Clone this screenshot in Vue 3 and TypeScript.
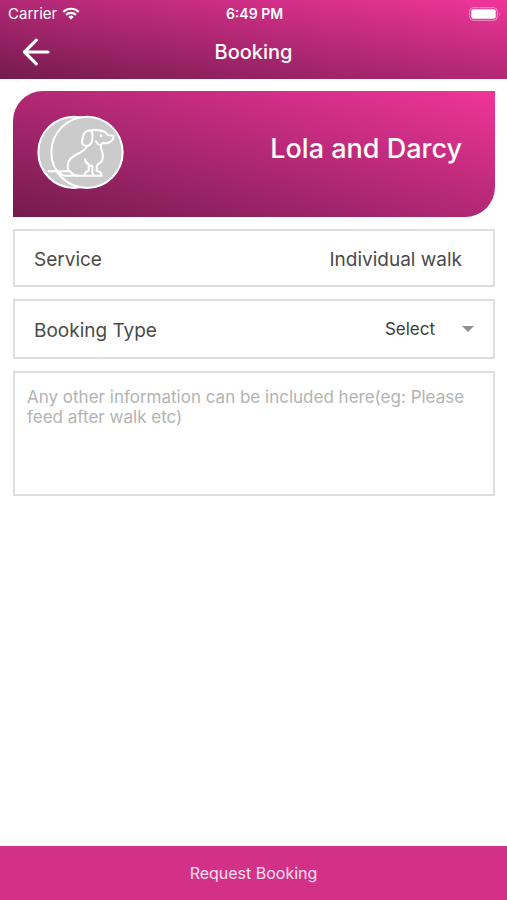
<script setup lang="ts">
import { ref } from 'vue'

const customer = 'Lola and Darcy'
const service = 'Individual walk'
const bookingTypes: string[] = ['One-off', 'Recurring']
const bookingType = ref('')
const notes = ref('')
</script>

<template>
  <div class="screen">
    <header class="top">
      <div class="status">
        <div class="carrier">
          <span>Carrier</span>
          <svg class="wifi" viewBox="0 0 18 13" aria-hidden="true">
            <path d="M1.2 4.9A11.2 11.2 0 0 1 16.8 4.9" />
            <path d="M4 7.9A7.2 7.2 0 0 1 14 7.9" />
            <path class="dot" d="M9 12.6L6.3 9.9A3.8 3.8 0 0 1 11.7 9.9Z" />
          </svg>
        </div>
        <span class="time">6:49 PM</span>
        <svg class="battery" viewBox="0 0 32 14" aria-hidden="true">
          <rect class="case" x="0.7" y="0.7" width="27.6" height="12.6" rx="3.6" />
          <rect class="charge" x="2.3" y="2.3" width="24.4" height="9.4" rx="2" />
          <path class="tip" d="M30 5Q31.6 7 30 9Z" />
        </svg>
      </div>
      <div class="nav">
        <button class="back" type="button" aria-label="Back">
          <svg viewBox="0 0 28 28" aria-hidden="true">
            <path d="M26 14H2.5M14.3 2.2L2.5 14L14.3 25.8" />
          </svg>
        </button>
        <h1>Booking</h1>
      </div>
    </header>

    <main class="content">
      <section class="card">
        <svg class="avatar" viewBox="111 104 261 225" aria-hidden="true">
          <circle class="disc" cx="222" cy="216" r="107" />
          <circle class="disc" cx="261" cy="216" r="107" />
          <path d="M145 273H178Q183 285 196 286H305Q304 273 290 272V259Q291 252 301 247C312 238 309 218 304 207C300 197 303 190 309 188C323 190 340 186 341 166L325 165Q317 154 305 151Q287 147 272 150" />
          <path d="M277 157C275 148 263 149 255 156C248 163 250 172 246 180C244 190 249 196 261 197C274 196 279 183 277 157Z" />
          <path d="M262 197C255 209 240 218 227 224C213 231 203 241 203 257Q202 267 208 273M183 273H210Q219 285 234 286" />
          <path d="M255 237Q255 246 266 252V271Q254 274 254 285M266 256H277V278L281 285" />
          <path d="M288 183Q290 190 297 193" />
          <circle class="eye" cx="303" cy="166" r="4" />
        </svg>
        <h2>{{ customer }}</h2>
      </section>

      <section class="row service">
        <span>Service</span>
        <span class="value">{{ service }}</span>
      </section>

      <section class="row type">
        <label for="booking-type">Booking Type</label>
        <div class="picker">
          <select id="booking-type" v-model="bookingType">
            <option value="">Select</option>
            <option v-for="t in bookingTypes" :key="t" :value="t">{{ t }}</option>
          </select>
          <svg class="caret" viewBox="0 0 12 6" aria-hidden="true"><path d="M0 0H12L6 6Z" /></svg>
        </div>
      </section>

      <textarea
        v-model="notes"
        class="notes"
        aria-label="Other information"
        placeholder="Any other information can be included here(eg: Please feed after walk etc)"
      ></textarea>
    </main>

    <button class="submit" type="button">Request Booking</button>
  </div>
</template>

<style>
body {
  margin: 0;
  background: #fff;
}
</style>

<style scoped>
.screen {
  display: flex;
  flex-direction: column;
  min-height: 100vh;
  font-family: Inter, "Liberation Sans", sans-serif;
  color: #4a4a4a;
}

.top {
  color: #fff;
  background: linear-gradient(to top right, #741b4f, #f03599);
}

.status {
  display: grid;
  grid-template-columns: 1fr auto 1fr;
  align-items: center;
  height: 27px;
  padding: 0 6px 0 8px;
  font-size: 15px;
}

.carrier {
  display: flex;
  align-items: center;
  gap: 5px;
}

.wifi {
  width: 18px;
  height: 13px;
  fill: none;
  stroke: #fff;
  stroke-width: 2.2;
}

.wifi .dot {
  fill: #fff;
  stroke: none;
}

.time {
  font-size: 14px;
  font-weight: 600;
}

.battery {
  justify-self: end;
  width: 32px;
  height: 14px;
  fill: #fff;
}

.battery .case {
  fill: none;
  stroke: #fff;
  stroke-opacity: 0.5;
}

.battery .tip {
  opacity: 0.5;
}

.nav {
  display: grid;
  grid-template-columns: 1fr auto 1fr;
  align-items: center;
  height: 50px;
  padding: 0 22px 2px;
}

.back {
  display: flex;
  justify-self: start;
  padding: 0;
  border: 0;
  background: none;
}

.back svg {
  width: 28px;
  height: 28px;
  fill: none;
  stroke: #fff;
  stroke-width: 3.2;
  stroke-linecap: round;
  stroke-linejoin: round;
}

h1,
h2 {
  margin: 0;
  font-weight: 500;
}

h1 {
  font-size: 20px;
}

.content {
  display: flex;
  flex: 1;
  flex-direction: column;
  gap: 12px;
  padding: 12px 12px 12px 13px;
}

.card {
  display: flex;
  align-items: center;
  justify-content: space-between;
  box-sizing: border-box;
  height: 126px;
  padding: 0 33px 4px 24px;
  border-radius: 30px 0 30px 0;
  color: #fff;
  background: linear-gradient(to top right, #741b4f, #f03599);
}

.avatar {
  width: 87px;
  height: 75px;
  fill: none;
  stroke: #fff;
  stroke-width: 6;
  stroke-linecap: round;
  stroke-linejoin: round;
}

.avatar .disc {
  fill: #cbcbcb;
}

.avatar .eye {
  fill: #fff;
  stroke: none;
}

h2 {
  padding-bottom: 8px;
  font-size: 27px;
}

.row {
  display: flex;
  align-items: center;
  justify-content: space-between;
  box-sizing: border-box;
  padding: 2px 31px 0 19px;
  border: 2px solid #dedede;
  font-size: 19px;
}

.service {
  height: 58px;
}

.type {
  height: 60px;
  padding-right: 19px;
}

.picker {
  display: flex;
  align-items: center;
  gap: 27px;
  padding-bottom: 2px;
}

select {
  padding: 0;
  border: 0;
  appearance: none;
  background: none;
  color: #3c3c3c;
  font-family: inherit;
  font-size: 17px;
  text-align: right;
  text-align-last: right;
}

.caret {
  width: 12px;
  height: 6px;
  fill: #8f8f8f;
}

.notes {
  display: block;
  box-sizing: border-box;
  width: 100%;
  height: 125px;
  padding: 14px 12px;
  border: 2px solid #dedede;
  border-radius: 0;
  resize: none;
  outline: none;
  background: none;
  color: #4a4a4a;
  font-family: inherit;
  font-size: 17px;
  line-height: 20px;
}

.notes::placeholder {
  color: #b3b3b3;
}

.submit {
  height: 54px;
  padding: 0;
  border: 0;
  background: #d33088;
  color: #ffe0f2;
  font-family: inherit;
  font-size: 16px;
}
</style>
